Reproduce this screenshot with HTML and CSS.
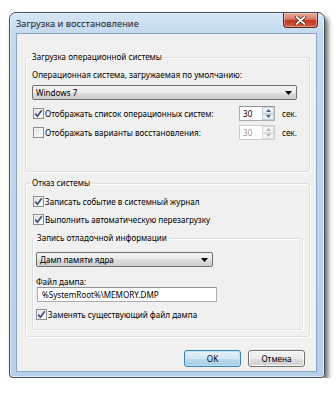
FILE: index.html
```html
<!DOCTYPE html>
<html lang="ru">
<head>
<meta charset="utf-8">
<title>Загрузка и восстановление</title>
<link rel="stylesheet" href="styles.css">
</head>
<body>
<div class="stage">
  <div class="window">
    <div class="titlebar">
      <span class="title">Загрузка и восстановление</span>
      <div class="close">
        <svg width="11" height="9" viewBox="0 0 11 9"><path d="M1.5 1 L9.5 8 M9.5 1 L1.5 8" stroke="#4a1a12" stroke-width="3.2" stroke-linecap="round"/><path d="M1.5 1 L9.5 8 M9.5 1 L1.5 8" stroke="#fff" stroke-width="1.8" stroke-linecap="round"/></svg>
      </div>
    </div>
    <div class="client">
      <fieldset class="group g1">
        <legend>Загрузка операционной системы</legend>
        <div class="label">Операционная система, загружаемая по умолчанию:</div>
        <div class="combo combo-wide"><span>Windows 7</span><svg class="arrow" width="7" height="4" viewBox="0 0 7 4"><path d="M0 0 H7 L3.5 4 Z" fill="#000"/></svg></div>
        <div class="row row-a">
          <label class="cb"><span class="box"><svg width="9" height="9" viewBox="0 0 9 9"><path d="M1.2 4.6 L3.4 7.2 L7.8 1.2" fill="none" stroke="#3b4e83" stroke-width="1.7"/></svg></span>Отображать список операционных систем:</label>
          <div class="spin"><span class="val">30</span><span class="spinbtns"><span class="sb"><svg width="5" height="3" viewBox="0 0 5 3"><path d="M0 3 H5 L2.5 0 Z" fill="#4c607a"/></svg></span><span class="sb"><svg width="5" height="3" viewBox="0 0 5 3"><path d="M0 0 H5 L2.5 3 Z" fill="#4c607a"/></svg></span></span></div>
          <span class="unit">сек.</span>
        </div>
        <div class="row row-b">
          <label class="cb"><span class="box"></span>Отображать варианты восстановления:</label>
          <div class="spin disabled"><span class="val">30</span><span class="spinbtns"><span class="sb"><svg width="5" height="3" viewBox="0 0 5 3"><path d="M0 3 H5 L2.5 0 Z" fill="#b4b4b4"/></svg></span><span class="sb"><svg width="5" height="3" viewBox="0 0 5 3"><path d="M0 0 H5 L2.5 3 Z" fill="#b4b4b4"/></svg></span></span></div>
          <span class="unit">сек.</span>
        </div>
      </fieldset>

      <fieldset class="group g2">
        <legend>Отказ системы</legend>
        <div class="row row-c">
          <label class="cb"><span class="box"><svg width="9" height="9" viewBox="0 0 9 9"><path d="M1.2 4.6 L3.4 7.2 L7.8 1.2" fill="none" stroke="#3b4e83" stroke-width="1.7"/></svg></span>Записать событие в системный журнал</label>
        </div>
        <div class="row row-d">
          <label class="cb"><span class="box"><svg width="9" height="9" viewBox="0 0 9 9"><path d="M1.2 4.6 L3.4 7.2 L7.8 1.2" fill="none" stroke="#3b4e83" stroke-width="1.7"/></svg></span>Выполнить автоматическую перезагрузку</label>
        </div>
        <fieldset class="group g3">
          <legend>Запись отладочной информации</legend>
          <div class="combo combo-small"><span>Дамп памяти ядра</span><svg class="arrow" width="7" height="4" viewBox="0 0 7 4"><path d="M0 0 H7 L3.5 4 Z" fill="#000"/></svg></div>
          <div class="label label-file">Файл дампа:</div>
          <div class="textbox">%SystemRoot%\MEMORY.DMP</div>
          <div class="row row-e">
            <label class="cb"><span class="box"><svg width="9" height="9" viewBox="0 0 9 9"><path d="M1.2 4.6 L3.4 7.2 L7.8 1.2" fill="none" stroke="#3b4e83" stroke-width="1.7"/></svg></span>Заменять существующий файл дампа</label>
          </div>
        </fieldset>
      </fieldset>

      <div class="buttons">
        <button class="btn btn-default">OK</button>
        <button class="btn">Отмена</button>
      </div>
    </div>
  </div>
</div>
</body>
</html>
```

FILE: styles.css
```css
* { box-sizing: border-box; }

body {
  margin: 0;
  background: #ffffff;
  font-family: "Noto Sans", "Open Sans", sans-serif;
  font-size: 8.1px;
  color: #000;
}

.stage {
  padding: 12px 0 0 9px;
}

.window {
  width: 316px;
  height: 366px;
  border: 1px solid #3e4f62;
  border-radius: 7px 7px 4px 4px;
  background: linear-gradient(180deg, #d6e6f6 0, #c2d8ef 22px, #b7cfea 100%);
  box-shadow: 3px 4px 5px rgba(0, 0, 0, 0.6), inset 0 0 0 1px rgba(255, 255, 255, 0.55);
  padding: 0 7px 5px 6px;
  display: flex;
  flex-direction: column;
}

.titlebar {
  height: 20px;
  display: flex;
  justify-content: space-between;
  align-items: flex-start;
}

.title {
  margin-top: 5px;
  font-size: 9.3px;
  line-height: 12px;
  color: #1b1b1b;
}

.close {
  width: 35px;
  height: 15px;
  margin-right: -1px;
  border: 1px solid #5b2b22;
  border-top: none;
  border-radius: 0 0 4px 4px;
  background: linear-gradient(180deg, #e9aa9c 0, #d87a66 45%, #c0391f 52%, #cf5a3d 100%);
  box-shadow: inset 0 0 0 1px rgba(255, 220, 210, 0.45);
  display: flex;
  align-items: center;
  justify-content: center;
}

.client {
  flex: 1;
  background: #f0f0f0;
  border: 1px solid #8ba6c4;
  padding: 17px 6px 0 8px;
}

.group {
  margin: 0;
  min-width: 0;
  border: 1px solid #d5dfe5;
  border-radius: 3px;
  box-shadow: 1px 1px 0 #fff, inset 1px 1px 0 #fff;
}

.group legend {
  padding: 0 2px;
  line-height: 12px;
}

.g1 {
  padding: 0 12px 31px 6px;
}

.g1 legend {
  margin-left: -2px;
}

.g2 {
  margin-top: 5px;
  padding: 0 6px 6px 6px;
}

.g2 legend {
  margin-left: -2px;
}

.g3 {
  margin-top: 5px;
  padding: 0 6px 7px 3px;
}

.g3 legend {
  margin-left: -1px;
}

.label {
  margin-top: 6px;
  line-height: 12px;
}

.label-file {
  margin-top: 10px;
  line-height: 10px;
}

.combo {
  height: 15px;
  border: 1px solid #707070;
  border-radius: 2px;
  background: linear-gradient(180deg, #f3f3f3 0, #ebebeb 50%, #dddddd 50%, #cfcfcf 100%);
  display: flex;
  align-items: center;
  justify-content: space-between;
  padding: 0 4px 0 3px;
  line-height: 12px;
}

.combo-wide {
  margin-top: 4px;
}

.combo-small {
  margin-top: 8px;
  width: 177px;
}

.row {
  display: flex;
  align-items: center;
  height: 15px;
}

.row-a { margin-top: 6px; }
.row-b { margin-top: 4px; }
.row-c { margin-top: 5px; }
.row-d { margin-top: 3px; }
.row-e { margin-top: 5px; }

.cb {
  flex: 1;
  display: flex;
  align-items: center;
  line-height: 12px;
}

.box {
  width: 11px;
  height: 11px;
  margin: 0 1px 0 1px;
  border: 1px solid #8e8f8f;
  background: linear-gradient(135deg, #d9d9d9 0, #f4f4f4 60%, #ffffff 100%);
  box-shadow: inset 0 0 0 1px #f4f4f4;
  display: flex;
  align-items: center;
  justify-content: center;
}

.spin {
  width: 36px;
  height: 15px;
  display: flex;
  border: 1px solid #abadb3;
  border-top-color: #8e9298;
  background: #fff;
}

.spin .val {
  flex: 1;
  padding-left: 3px;
  line-height: 13px;
}

.spinbtns {
  width: 12px;
  display: flex;
  flex-direction: column;
}

.sb {
  flex: 1;
  display: flex;
  align-items: center;
  justify-content: center;
  background: linear-gradient(180deg, #f6f9fc, #dfe8f1);
  border: 1px solid #c6d2de;
}

.spin.disabled {
  border-color: #c9cbcf;
}

.spin.disabled .val {
  color: #9a9a9a;
}

.spin.disabled .sb {
  background: #f4f4f4;
  border-color: #dcdcdc;
}

.unit {
  width: 15px;
  margin-left: 7px;
  line-height: 12px;
}

.textbox {
  width: 180px;
  height: 15px;
  margin-left: 1px;
  border: 1px solid #abadb3;
  border-top-color: #8e9298;
  background: #fff;
  padding-left: 4px;
  line-height: 13px;
}

.g3 .box {
  margin-left: 0;
}

.buttons {
  margin-top: 13px;
  display: flex;
  justify-content: flex-end;
  gap: 7px;
  padding-right: 5px;
}

.btn {
  width: 57px;
  height: 17px;
  border: 1px solid #707070;
  border-radius: 3px;
  background: linear-gradient(180deg, #f2f2f2 0, #ebebeb 50%, #dddddd 50%, #cfcfcf 100%);
  box-shadow: inset 0 0 0 1px #fcfcfc;
  font: inherit;
  color: #000;
  padding: 0;
  line-height: 13px;
}

.btn-default {
  border-color: #3c7fb1;
  background: linear-gradient(180deg, #e5f1f9 0, #d4e7f4 50%, #bcd9ee 50%, #a9cde6 100%);
  box-shadow: inset 0 0 0 1px #b9e6fb;
}
```
